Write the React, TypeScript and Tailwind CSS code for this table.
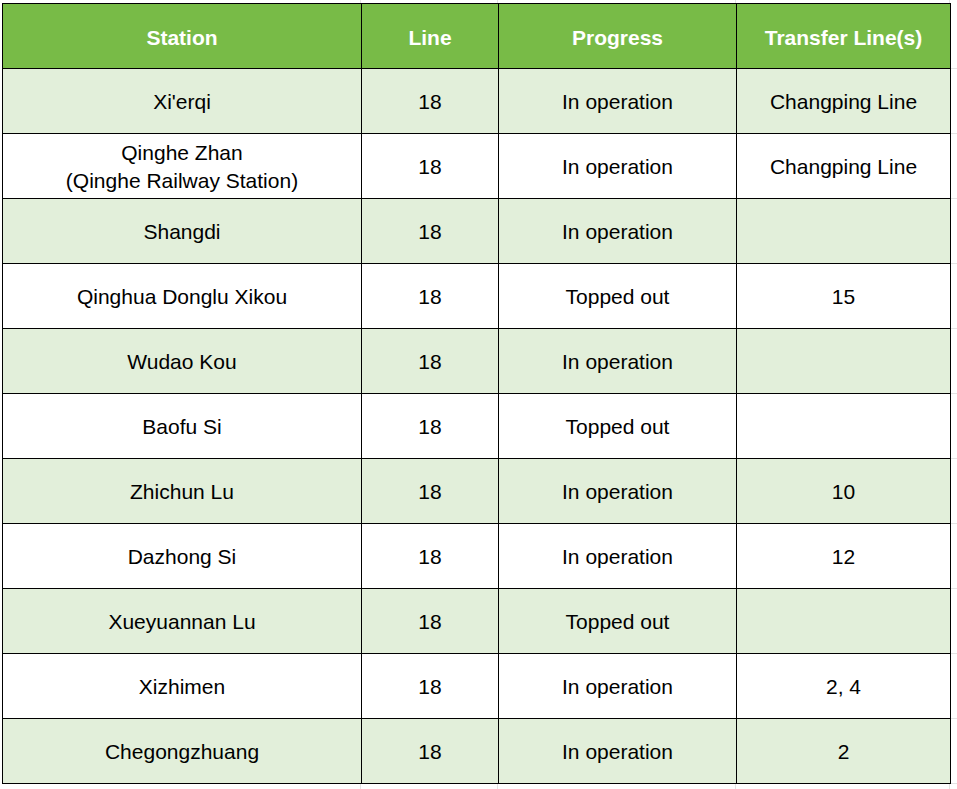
const rows: [string[], string, string, string][] = [
  [["Xi'erqi"], '18', 'In operation', 'Changping Line'],
  [['Qinghe Zhan', '(Qinghe Railway Station)'], '18', 'In operation', 'Changping Line'],
  [['Shangdi'], '18', 'In operation', ''],
  [['Qinghua Donglu Xikou'], '18', 'Topped out', '15'],
  [['Wudao Kou'], '18', 'In operation', ''],
  [['Baofu Si'], '18', 'Topped out', ''],
  [['Zhichun Lu'], '18', 'In operation', '10'],
  [['Dazhong Si'], '18', 'In operation', '12'],
  [['Xueyuannan Lu'], '18', 'Topped out', ''],
  [['Xizhimen'], '18', 'In operation', '2, 4'],
  [['Chegongzhuang'], '18', 'In operation', '2'],
];

function GridStrip({ h }: { h: string }) {
  // faint spreadsheet gridlines peeking out around the table
  return (
    <div className={`flex ${h}`}>
      <div className="w-[361px] border-r border-[#e3e3e3]" />
      <div className="w-[137px] border-r border-[#e3e3e3]" />
      <div className="w-[238px] border-r border-[#e3e3e3]" />
      <div className="w-[214px] border-r border-[#e3e3e3]" />
    </div>
  );
}

export default function App() {
  return (
    <div
      className="w-[957px] h-[789px] bg-white overflow-hidden text-black"
      style={{ fontFamily: '"Liberation Sans", Arial, sans-serif' }}
    >
      <GridStrip h="h-[3px]" />
      <div className="pl-[2px]">
        <table className="table-fixed border-collapse w-[955px]">
          <colgroup>
            <col className="w-[359px]" />
            <col className="w-[137px]" />
            <col className="w-[238px]" />
            <col className="w-[214px]" />
            <col className="w-[7px]" />
          </colgroup>
          <thead>
            <tr className="h-[65px]">
              {['Station', 'Line', 'Progress', 'Transfer Line(s)'].map((t) => (
                <th
                  key={t}
                  className="border border-black bg-[#78bb47] text-white font-bold text-[21px] text-center align-middle p-0 pt-[4px]"
                >
                  {t}
                </th>
              ))}
              <td className="border-b border-[#e3e3e3]" />
            </tr>
          </thead>
          <tbody>
            {rows.map(([station, line, progress, transfer], i) => (
              <tr key={i} className="h-[65px]">
                {[station, [line], [progress], [transfer]].map((lines, j) => (
                  <td
                    key={j}
                    className={`border border-black text-[21px] leading-[28px] text-center align-middle p-0 pt-[2px] ${
                      i % 2 === 0 ? 'bg-[#e2efda]' : 'bg-white'
                    }`}
                  >
                    {lines.map((l, k) => (
                      <div key={k}>{l}</div>
                    ))}
                  </td>
                ))}
                <td className="border-b border-[#e3e3e3]" />
              </tr>
            ))}
          </tbody>
        </table>
      </div>
      <GridStrip h="h-[6px]" />
    </div>
  );
}
